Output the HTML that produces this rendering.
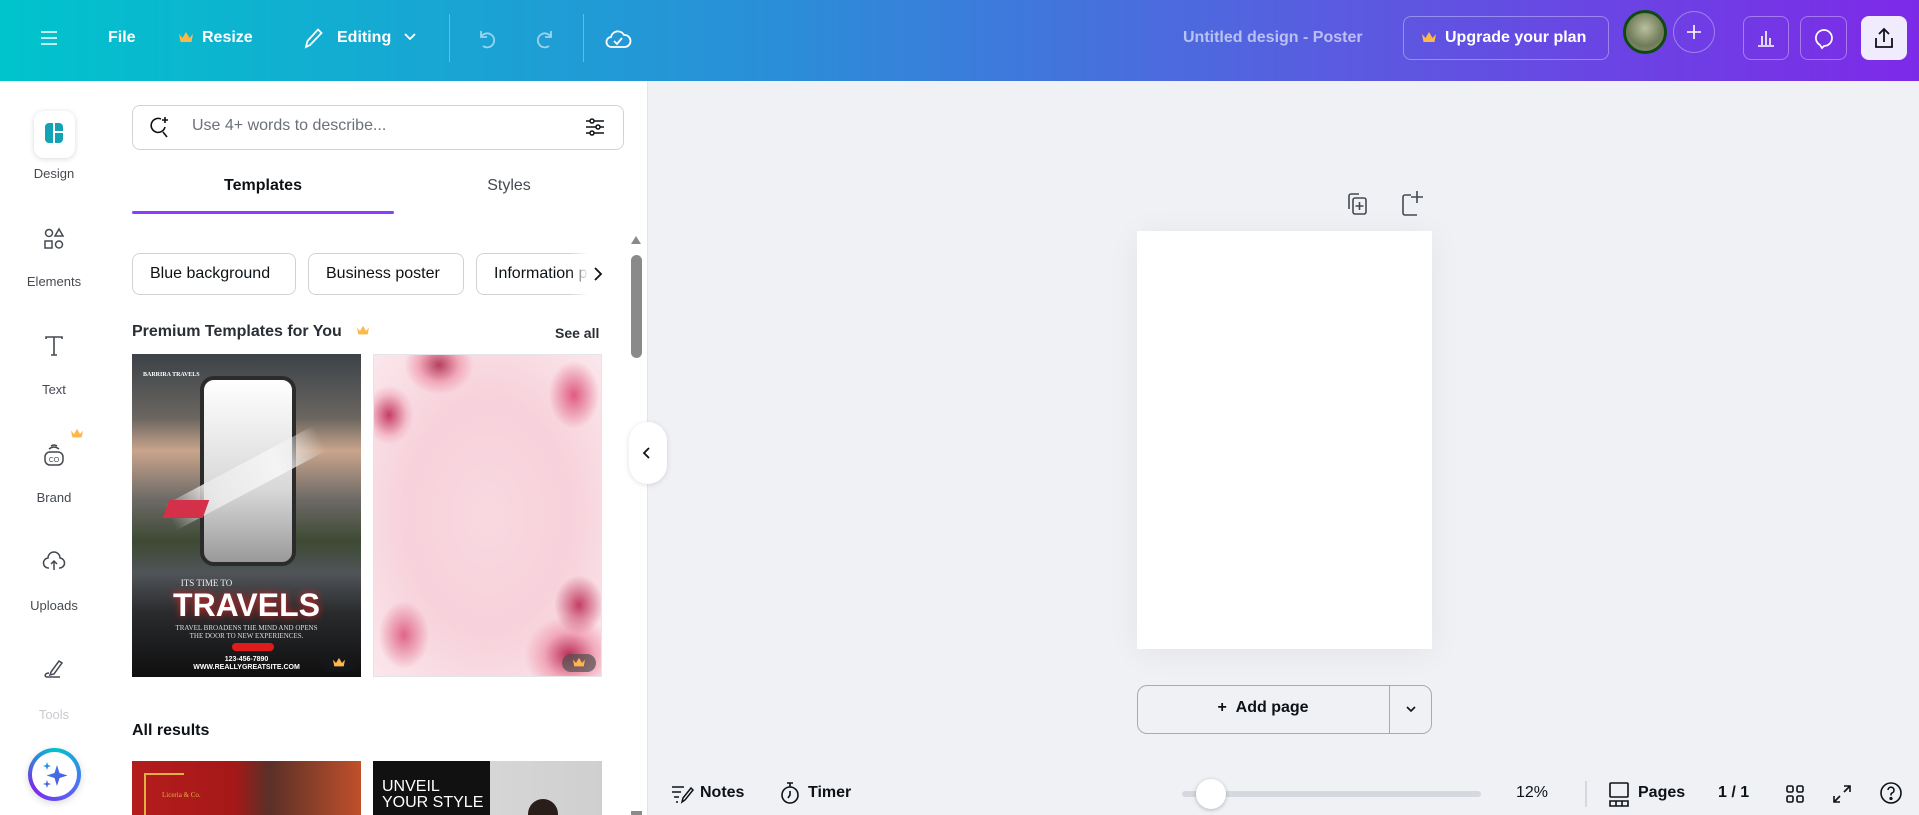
<!DOCTYPE html>
<html><head><meta charset="utf-8"><style>
*{box-sizing:border-box;margin:0;padding:0}
html,body{width:1919px;height:815px;overflow:hidden}
body{font-family:"Liberation Sans",sans-serif;background:#eff1f5;position:relative;color:#0d1216}
.a{position:absolute}
.top{left:0;top:0;width:1919px;height:81px;background:linear-gradient(90deg,#00c4cc 0%,#2a8fd8 40%,#5a5be0 70%,#7d2ae8 100%)}
.tw{color:#fff;font-weight:bold;font-size:16px}
.rail{left:0;top:81px;width:108px;height:734px;background:#fff}
.panel{left:108px;top:81px;width:540px;height:734px;background:#fff;border-right:1px solid #e3e5e8}
.lbl{font-size:13px;color:#454a52;width:108px;text-align:center;left:0}
.chip{top:253px;height:42px;border:1px solid #cfd3d8;border-radius:8px;font-size:16px;line-height:40px;padding:0 17px;color:#0d1216;background:#fff;white-space:nowrap;overflow:hidden}
svg{position:absolute}
.ib{border:1px solid rgba(255,255,255,.35);border-radius:8px}
</style></head><body>
<div class="a top"></div>
<svg style="left:39px;top:28px" width="20" height="20" viewBox="0 0 20 20" stroke="#fff" stroke-width="1.6"><path d="M2 4h16M2 10h16M2 16h16"/></svg>
<div class="a tw" style="left:108px;top:29px">File</div>
<svg style="left:178px;top:31px" width="16" height="14" viewBox="0 0 16 14"><path d="M1 3l3.5 4L8 1l3.5 6L15 3l-1.5 8h-11z" fill="#ffb74a"/></svg>
<div class="a tw" style="left:202px;top:29px">Resize</div>
<svg style="left:302px;top:26px" width="22" height="24" viewBox="0 0 22 24" fill="none" stroke="#fff" stroke-width="1.8"><path d="M4 21l1.5-6L16 3.5l3.5 3.5L8 19z"/></svg>
<div class="a tw" style="left:337px;top:29px">Editing</div>
<svg style="left:403px;top:32px" width="14" height="10" viewBox="0 0 14 10" fill="none" stroke="#fff" stroke-width="1.8"><path d="M2 2l5 5 5-5"/></svg>
<div class="a" style="left:449px;top:14px;width:1px;height:48px;background:rgba(255,255,255,.3)"></div>
<svg style="left:475px;top:27px" width="24" height="24" viewBox="0 0 24 24" fill="none" stroke="rgba(255,255,255,.55)" stroke-width="1.8"><path d="M6 4v6h6M6 10a7 7 0 1 1 2 9"/></svg>
<svg style="left:533px;top:27px" width="24" height="24" viewBox="0 0 24 24" fill="none" stroke="rgba(255,255,255,.55)" stroke-width="1.8"><path d="M18 4v6h-6M18 10a7 7 0 1 0-2 9"/></svg>
<div class="a" style="left:583px;top:14px;width:1px;height:48px;background:rgba(255,255,255,.3)"></div>
<svg style="left:604px;top:25px" width="28" height="28" viewBox="0 0 28 28" fill="none" stroke="#fff" stroke-width="1.8"><path d="M8 22a5 5 0 0 1-1-10 7 7 0 0 1 13-2 6 6 0 0 1 1 12z"/><path d="M10 16l3 3 5-6"/></svg>
<div class="a" style="left:1183px;top:29px;font-size:16px;font-weight:bold;color:rgba(255,255,255,.6)">Untitled design - Poster</div>
<div class="a ib" style="left:1403px;top:16px;width:206px;height:44px"></div>
<svg style="left:1421px;top:31px" width="16" height="14" viewBox="0 0 16 14"><path d="M1 3l3.5 4L8 1l3.5 6L15 3l-1.5 8h-11z" fill="#ffb74a"/></svg>
<div class="a tw" style="left:1445px;top:29px">Upgrade your plan</div>
<div class="a" style="left:1623px;top:10px;width:44px;height:44px;border-radius:50%;background:radial-gradient(circle at 50% 40%,#b9c0a0,#6e7a58 60%,#8d9a80);border:3px solid #0e4a12"></div>
<div class="a" style="left:1673px;top:11px;width:42px;height:42px;border-radius:50%;border:1px solid rgba(255,255,255,.35)"></div>
<svg style="left:1684px;top:22px" width="20" height="20" viewBox="0 0 20 20" stroke="#fff" stroke-width="1.6"><path d="M10 3v14M3 10h14"/></svg>
<div class="a ib" style="left:1743px;top:16px;width:46px;height:44px"></div>
<svg style="left:1755px;top:27px" width="22" height="22" viewBox="0 0 22 22" fill="none" stroke="#fff" stroke-width="1.6"><path d="M3 19h16M7 18V9M11 18V4M15 18V11"/></svg>
<div class="a ib" style="left:1800px;top:16px;width:47px;height:44px"></div>
<svg style="left:1812px;top:27px" width="24" height="24" viewBox="0 0 24 24" fill="none" stroke="#fff" stroke-width="1.7"><path d="M12 3a8 8 0 0 0-4 15l2 3 2-2a8 8 0 0 0 0-16z"/></svg>
<div class="a" style="left:1861px;top:16px;width:46px;height:44px;border-radius:8px;background:#f1ecfd"></div>
<svg style="left:1872px;top:26px" width="24" height="24" viewBox="0 0 24 24" fill="none" stroke="#0d1216" stroke-width="1.8"><path d="M12 16V3M7 8l5-5 5 5M4 12v9h16v-9"/></svg>

<div class="a rail"></div>
<div class="a" style="left:34px;top:111px;width:41px;height:47px;border-radius:10px;background:#fff;box-shadow:0 1px 6px rgba(0,0,0,.15)"></div>
<svg style="left:43px;top:121px" width="22" height="24" viewBox="0 0 22 24"><path d="M2 6a4 4 0 0 1 4-4h4v20H6a4 4 0 0 1-4-4z M12 2h4a4 4 0 0 1 4 4v4h-8z M12 12h8v6a4 4 0 0 1-4 4h-4z" fill="#13a3b5"/></svg>
<div class="a lbl" style="top:166px">Design</div>
<svg style="left:42px;top:227px" width="24" height="24" viewBox="0 0 24 24" fill="none" stroke="#454a52" stroke-width="1.5"><circle cx="7" cy="6" r="3.5"/><path d="M17 2l4 7h-8z"/><rect x="3" y="14" width="7" height="7"/><circle cx="17" cy="17.5" r="3.5"/></svg>
<div class="a lbl" style="top:274px">Elements</div>
<svg style="left:43px;top:334px" width="22" height="24" viewBox="0 0 22 24" fill="none" stroke="#454a52" stroke-width="1.6"><path d="M3 5V3h16v2M11 3v18M8 21h6"/></svg>
<div class="a lbl" style="top:382px">Text</div>
<svg style="left:70px;top:428px" width="14" height="12" viewBox="0 0 16 14"><path d="M1 3l3.5 4L8 1l3.5 6L15 3l-1.5 8h-11z" fill="#ffb74a"/></svg>
<svg style="left:42px;top:443px" width="24" height="24" viewBox="0 0 24 24" fill="none" stroke="#454a52" stroke-width="1.5"><rect x="3" y="9" width="18" height="13" rx="5"/><path d="M7 6q5-4 10 0M9 3q3-2 6 0"/><text x="12" y="19" font-size="7" text-anchor="middle" fill="#454a52" stroke="none" font-family="Liberation Sans">CO</text></svg>
<div class="a lbl" style="top:490px">Brand</div>
<svg style="left:42px;top:549px" width="24" height="24" viewBox="0 0 24 24" fill="none" stroke="#454a52" stroke-width="1.5"><path d="M7 19a5 5 0 0 1-1-10 6 6 0 0 1 12 0 5 5 0 0 1-1 10"/><path d="M12 21v-9M9 15l3-3 3 3"/></svg>
<div class="a lbl" style="top:598px">Uploads</div>
<svg style="left:42px;top:657px" width="24" height="24" viewBox="0 0 24 24" fill="none" stroke="#454a52" stroke-width="1.5"><path d="M9 15l8-11 3 2-8 11-4 1zM4 20h14M4 20c-2-2 0-4 3-4"/></svg>
<div class="a lbl" style="top:707px;color:#c8cbd0">Tools</div>
<div class="a" style="left:28px;top:748px;width:53px;height:53px;border-radius:50%;background:conic-gradient(#00c4cc,#4f6ef7,#7d2ae8,#00c4cc);box-shadow:0 2px 8px rgba(0,0,0,.15)"></div>
<div class="a" style="left:32px;top:752px;width:45px;height:45px;border-radius:50%;background:#fff"></div>
<svg style="left:38px;top:758px" width="34" height="34" viewBox="0 0 34 34"><defs><linearGradient id="g" x1="0" y1="0" x2="1" y2="1"><stop offset="0" stop-color="#1a9de0"/><stop offset="1" stop-color="#6a3de8"/></linearGradient></defs><path d="M19 7l2.5 8 8 2.5-8 2.5-2.5 8-2.5-8-8-2.5 8-2.5z M9 4l1 3 3 1-3 1-1 3-1-3-3-1 3-1z M9 22l1 3 3 1-3 1-1 3-1-3-3-1 3-1z" fill="url(#g)"/></svg>

<div class="a panel"></div>
<div class="a" style="left:132px;top:105px;width:492px;height:45px;border:1px solid #cfd3d8;border-radius:8px"></div>
<svg style="left:148px;top:115px" width="24" height="24" viewBox="0 0 24 24" fill="none" stroke="#0d1216" stroke-width="1.6"><path d="M13 4a7 7 0 1 0 4 8M15 17l4 5"/><path d="M17 2v6M14 5h6"/></svg>
<div class="a" style="left:192px;top:117px;font-size:16px;color:#6b7079">Use 4+ words to describe...</div>
<svg style="left:583px;top:115px" width="24" height="24" viewBox="0 0 24 24" fill="none" stroke="#0d1216" stroke-width="1.5"><path d="M3 6h18M3 12h18M3 18h18"/><circle cx="9" cy="6" r="2" fill="#fff"/><circle cx="15" cy="12" r="2" fill="#fff"/><circle cx="9" cy="18" r="2" fill="#fff"/></svg>
<div class="a" style="left:132px;top:177px;width:262px;text-align:center;font-size:16px;font-weight:bold">Templates</div>
<div class="a" style="left:394px;top:177px;width:230px;text-align:center;font-size:16px;color:#454a52">Styles</div>
<div class="a" style="left:132px;top:211px;width:262px;height:3px;background:#8b3dff;border-radius:2px"></div>
<div class="a chip" style="left:132px;width:164px">Blue background</div>
<div class="a chip" style="left:308px;width:156px">Business poster</div>
<div class="a chip" style="left:476px;width:124px;border-right:none;border-radius:8px 0 0 8px">Information p</div>
<div class="a" style="left:570px;top:253px;width:30px;height:42px;background:linear-gradient(90deg,rgba(255,255,255,0),#fff 60%)"></div>
<svg style="left:592px;top:266px" width="12" height="16" viewBox="0 0 12 16" fill="none" stroke="#0d1216" stroke-width="1.8"><path d="M3 2l6 6-6 6"/></svg>
<div class="a" style="left:132px;top:323px;font-size:16px;font-weight:bold;color:#2a2f36">Premium Templates for You</div>
<svg style="left:356px;top:325px" width="14" height="12" viewBox="0 0 16 14"><path d="M1 3l3.5 4L8 1l3.5 6L15 3l-1.5 8h-11z" fill="#ffb74a"/></svg>
<div class="a" style="left:555px;top:325px;font-size:14px;font-weight:bold;color:#2a2f36">See all</div>
<div class="a" style="left:132px;top:354px;width:229px;height:323px;overflow:hidden;background:linear-gradient(180deg,#3b4248 0%,#6c6660 20%,#c9a58c 30%,#6d6a66 45%,#3e4a34 58%,#505458 68%,#2a2b2d 80%,#0f0f10 100%)">
 <div class="a" style="left:68px;top:22px;width:96px;height:190px;border:4px solid #2b2b2b;border-radius:14px;background:linear-gradient(#fff,#d8d8d8 60%,#9a9a9a)"></div>
 <div class="a" style="left:28px;top:110px;width:170px;height:28px;background:linear-gradient(90deg,transparent,#e8e8e8 30%,#f4f4f4 70%,transparent);transform:rotate(-28deg)"></div>
 <div class="a" style="left:34px;top:146px;width:40px;height:18px;background:#d4304a;transform:skew(-20deg)"></div>
 <div class="a" style="left:0;top:224px;width:229px;text-align:center;color:#eee;font-family:'Liberation Serif',serif;font-size:9px;padding-right:80px">ITS TIME TO</div>
 <div class="a" style="left:0;top:234px;width:229px;text-align:center;color:#fff;font-weight:bold;font-size:32px;line-height:34px;text-shadow:0 0 8px #e02020">TRAVELS</div>
 <div class="a" style="left:0;top:270px;width:229px;text-align:center;color:#ddd;font-family:'Liberation Serif',serif;font-size:7px;line-height:8px">TRAVEL BROADENS THE MIND AND OPENS<br>THE DOOR TO NEW EXPERIENCES.</div>
 <div class="a" style="left:100px;top:289px;width:42px;height:8px;border-radius:4px;background:#e01b1b"></div>
 <div class="a" style="left:0;top:302px;width:229px;text-align:center;color:#fff;font-size:7px;font-weight:bold;line-height:8px">123-456-7890<br>WWW.REALLYGREATSITE.COM</div>
 <div class="a" style="left:11px;top:18px;color:#fff;font-family:'Liberation Serif',serif;font-size:6px;font-weight:bold">BARRIRA TRAVELS</div>
</div>
<div class="a" style="left:323px;top:654px;width:32px;height:18px;border-radius:9px;background:rgba(20,24,30,.5)"></div>
<svg style="left:332px;top:657px" width="14" height="12" viewBox="0 0 16 14"><path d="M1 3l3.5 4L8 1l3.5 6L15 3l-1.5 8h-11z" fill="#ffb74a"/></svg>
<div class="a" style="left:373px;top:354px;width:229px;height:323px;overflow:hidden;border:1px solid #e3e5e8;background:radial-gradient(ellipse at 50% 50%,#f9d9e1,#f7d1db 50%,#fbe7ec)">
 <div class="a" style="left:30px;top:-20px;width:70px;height:60px;border-radius:50%;background:radial-gradient(#b4405e,#f1a7b8 40%,rgba(248,200,212,0) 70%)"></div>
 <div class="a" style="left:-10px;top:30px;width:50px;height:60px;border-radius:50%;background:radial-gradient(#c43e62,rgba(240,160,180,.5) 50%,rgba(248,200,212,0) 70%)"></div>
 <div class="a" style="left:170px;top:0;width:60px;height:80px;background:radial-gradient(#e05b80,rgba(248,200,212,0) 60%)"></div>
 <div class="a" style="left:150px;top:260px;width:90px;height:80px;border-radius:50%;background:radial-gradient(#b93057,#f2a8ba 40%,rgba(248,200,212,0) 70%)"></div>
 <div class="a" style="left:180px;top:220px;width:50px;height:60px;border-radius:50%;background:radial-gradient(#c43e62,rgba(248,200,212,0) 70%)"></div>
 <div class="a" style="left:0;top:240px;width:60px;height:80px;background:radial-gradient(#e06688,rgba(248,200,212,0) 60%)"></div>
</div>
<div class="a" style="left:562px;top:654px;width:34px;height:18px;border-radius:9px;background:rgba(80,80,80,.7)"></div>
<svg style="left:572px;top:657px" width="14" height="12" viewBox="0 0 16 14"><path d="M1 3l3.5 4L8 1l3.5 6L15 3l-1.5 8h-11z" fill="#ffb74a"/></svg>
<div class="a" style="left:132px;top:722px;font-size:16px;font-weight:bold">All results</div>
<div class="a" style="left:132px;top:761px;width:229px;height:54px;overflow:hidden;background:linear-gradient(90deg,#b51c1c 0%,#a51818 45%,#5a3028 60%,#c0502a 100%)">
 <div class="a" style="left:12px;top:12px;width:40px;height:50px;border-left:2px solid #e0b040;border-top:2px solid #e0b040"></div>
 <div class="a" style="left:30px;top:30px;color:#e0b040;font-family:'Liberation Serif',serif;font-size:7px">Liceria &amp; Co.</div>
</div>
<div class="a" style="left:373px;top:761px;width:229px;height:54px;overflow:hidden;background:linear-gradient(90deg,#111 0%,#111 51%,#d6d6d6 51%,#cfcfcf 100%)">
 <div class="a" style="left:9px;top:18px;color:#fff;font-size:16px;line-height:16px">UNVEIL<br>YOUR STYLE</div>
 <div class="a" style="left:155px;top:38px;width:30px;height:30px;border-radius:50%;background:#2a1e1a"></div>
</div>
<svg style="left:629px;top:234px" width="14" height="12" viewBox="0 0 14 12"><path d="M7 2l5 8H2z" fill="#8a8a8a"/></svg>
<div class="a" style="left:631px;top:255px;width:11px;height:103px;border-radius:6px;background:#8a8a8a"></div>
<div class="a" style="left:631px;top:811px;width:11px;height:4px;background:#8a8a8a"></div>
<div class="a" style="left:629px;top:422px;width:38px;height:62px;border-radius:19px;background:#fff;box-shadow:0 1px 6px rgba(0,0,0,.12)"></div>
<svg style="left:641px;top:446px" width="12" height="14" viewBox="0 0 12 14" fill="none" stroke="#0d1216" stroke-width="1.8"><path d="M8 2L3 7l5 5"/></svg>

<svg style="left:1344px;top:191px" width="26" height="26" viewBox="0 0 26 26" fill="none" stroke="#454a52" stroke-width="1.6"><path d="M5 18V5a2 2 0 0 1 2-2h8"/><rect x="9" y="7" width="13" height="16" rx="2"/><path d="M15.5 11v8M11.5 15h8"/></svg>
<svg style="left:1398px;top:189px" width="26" height="28" viewBox="0 0 26 28" fill="none" stroke="#454a52" stroke-width="1.6"><path d="M13 6H7a2 2 0 0 0-2 2v16a2 2 0 0 0 2 2h12"/><path d="M19 2v12M13 8h12"/></svg>
<div class="a" style="left:1137px;top:231px;width:295px;height:418px;background:#fff;box-shadow:0 4px 30px rgba(0,0,0,.06)"></div>
<div class="a" style="left:1137px;top:685px;width:295px;height:49px;border:1px solid #a6abb2;border-radius:10px"></div>
<div class="a" style="left:1389px;top:686px;width:1px;height:47px;background:#a6abb2"></div>
<div class="a" style="left:1137px;top:699px;width:252px;text-align:center;font-size:16px;font-weight:bold">+ &nbsp;Add page</div>
<svg style="left:1404px;top:703px" width="14" height="12" viewBox="0 0 14 12" fill="none" stroke="#0d1216" stroke-width="1.6"><path d="M3 4l4 4 4-4"/></svg>

<svg style="left:670px;top:783px" width="24" height="22" viewBox="0 0 24 22" fill="none" stroke="#0d1216" stroke-width="1.5"><path d="M2 4h12M2 9h9M4 14h5M6 19h2M12 19l1-4 8-10 2 2-8 10z"/></svg>
<div class="a" style="left:700px;top:784px;font-size:16px;font-weight:bold">Notes</div>
<svg style="left:779px;top:781px" width="22" height="24" viewBox="0 0 22 24" fill="none" stroke="#0d1216" stroke-width="1.6"><circle cx="11" cy="14" r="8"/><path d="M8 2h6M11 2v4M11 10v4l-2 3"/></svg>
<div class="a" style="left:808px;top:784px;font-size:16px;font-weight:bold">Timer</div>
<div class="a" style="left:1182px;top:791px;width:299px;height:6px;border-radius:3px;background:#d5d9df"></div>
<div class="a" style="left:1196px;top:779px;width:30px;height:30px;border-radius:50%;background:#fff;box-shadow:0 1px 4px rgba(0,0,0,.25)"></div>
<div class="a" style="left:1516px;top:784px;font-size:16px">12%</div>
<div class="a" style="left:1585px;top:781px;width:2px;height:26px;background:#d5d9df"></div>
<svg style="left:1607px;top:781px" width="24" height="26" viewBox="0 0 24 26" fill="none" stroke="#0d1216" stroke-width="1.6"><rect x="3" y="2" width="18" height="14" rx="1"/><path d="M3 20h18v5H3zM9 20v5M15 20v5"/></svg>
<div class="a" style="left:1638px;top:784px;font-size:16px;font-weight:bold">Pages</div>
<div class="a" style="left:1718px;top:784px;font-size:16px;font-weight:bold">1 / 1</div>
<svg style="left:1784px;top:783px" width="22" height="22" viewBox="0 0 22 22" fill="none" stroke="#0d1216" stroke-width="1.6"><rect x="3" y="3" width="6" height="6" rx="1.5"/><rect x="13" y="3" width="6" height="6" rx="1.5"/><rect x="3" y="13" width="6" height="6" rx="1.5"/><rect x="13" y="13" width="6" height="6" rx="1.5"/></svg>
<svg style="left:1831px;top:783px" width="22" height="22" viewBox="0 0 22 22" fill="none" stroke="#0d1216" stroke-width="1.6"><path d="M13 3h6v6M19 3l-6 6M9 19H3v-6M3 19l6-6"/></svg>
<svg style="left:1878px;top:780px" width="26" height="26" viewBox="0 0 26 26" fill="none" stroke="#0d1216" stroke-width="1.6"><circle cx="13" cy="13" r="10"/><path d="M10 10a3 3 0 1 1 4 3c-1 .5-1 1-1 2.5"/><circle cx="13" cy="18.5" r=".8" fill="#0d1216"/></svg>
</body></html>
